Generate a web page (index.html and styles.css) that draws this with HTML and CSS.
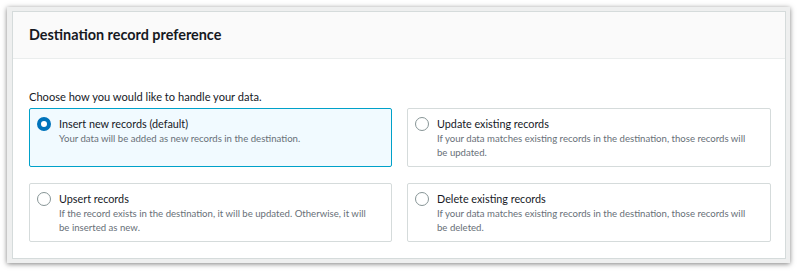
FILE: index.html
```html
<!DOCTYPE html>
<html lang="en">
<head>
<meta charset="utf-8">
<title>Destination record preference</title>
<link rel="stylesheet" href="styles.css">
</head>
<body>
<div class="frame">
  <section class="card">
    <header class="card-header">
      <h2 class="card-title">Destination record preference</h2>
    </header>
    <div class="card-body">
      <p class="prompt">Choose how you would like to handle your data.</p>
      <div class="tiles">
        <label class="tile selected">
          <span class="radio checked"></span>
          <span class="tile-text">
            <span class="tile-label">Insert new records (default)</span>
            <span class="tile-desc">Your data will be added as new records in the destination.</span>
          </span>
        </label>
        <label class="tile">
          <span class="radio"></span>
          <span class="tile-text">
            <span class="tile-label">Update existing records</span>
            <span class="tile-desc">If your data matches existing records in the destination, those records will be updated.</span>
          </span>
        </label>
        <label class="tile">
          <span class="radio"></span>
          <span class="tile-text">
            <span class="tile-label">Upsert records</span>
            <span class="tile-desc">If the record exists in the destination, it will be updated. Otherwise, it will be inserted as new.</span>
          </span>
        </label>
        <label class="tile">
          <span class="radio"></span>
          <span class="tile-text">
            <span class="tile-label">Delete existing records</span>
            <span class="tile-desc">If your data matches existing records in the destination, those records will be deleted.</span>
          </span>
        </label>
      </div>
    </div>
  </section>
</div>
</body>
</html>
```

FILE: styles.css
```css
* { box-sizing: border-box; }
html, body { margin: 0; padding: 0; background: #ffffff; }
body {
  font-family: Lato, "Open Sans", Arial, sans-serif;
  color: #16191f;
  width: 800px;
  height: 272px;
  overflow: hidden;
}
.frame {
  margin: 7px 0 0 7px;
  width: 783px;
  height: 256px;
  background: #eeefef;
  padding: 4px 4px 4px 5px;
  box-shadow: 0 1px 5px rgba(0, 0, 0, 0.5);
}
.card {
  background: #ffffff;
  border: 1px solid #d5dbdb;
  height: 248px;
  display: flex;
  flex-direction: column;
}
.card-header {
  background: #fafafa;
  border-bottom: 1px solid #eaeded;
  height: 50px;
  padding: 0 16px;
  display: flex;
  align-items: center;
}
.card-title {
  margin: 0;
  font-size: 14.4px;
  font-weight: 700;
  line-height: 20px;
}
.card-body {
  padding: 30px 14px 16px 16px;
}
.prompt {
  margin: 0 0 3px 0;
  font-size: 11.1px;
  line-height: 16px;
}
.tiles {
  display: grid;
  grid-template-columns: 363px 364px;
  column-gap: 15px;
  row-gap: 16px;
}
.tile {
  display: flex;
  align-items: flex-start;
  gap: 8px;
  border: 1px solid #d5dbdb;
  border-radius: 2px;
  padding: 7px 18px 6px 7px;
  background: #ffffff;
  min-height: 59px;
}
.tile.selected {
  background: #f1faff;
  border-color: #00a1c9;
}
.radio {
  flex: none;
  width: 14px;
  height: 14px;
  margin-top: 1px;
  border-radius: 50%;
  border: 1px solid #879596;
  background: #ffffff;
}
.radio.checked {
  border: 4px solid #0073bb;
}
.tile-text {
  display: flex;
  flex-direction: column;
}
.tile-label {
  font-size: 10.8px;
  line-height: 16px;
}
.tile-desc {
  font-size: 9.6px;
  line-height: 14px;
  color: #687078;
}
```
